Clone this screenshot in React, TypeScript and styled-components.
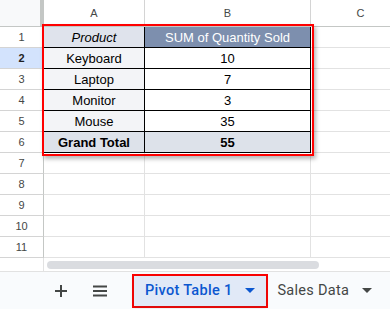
import styled, { createGlobalStyle } from "styled-components";

const GlobalStyle = createGlobalStyle`
    html, body {
        margin: 0;
        padding: 0;
        background: #ffffff;
    }
`;

type CellProps = {
    $bg?: string;
    $color?: string;
    $italic?: boolean;
    $bold?: boolean;
    $pivot?: boolean;
};

const rows: { name: string; qty: string }[] = [
    { name: "Keyboard", qty: "10" },
    { name: "Laptop", qty: "7" },
    { name: "Monitor", qty: "3" },
    { name: "Mouse", qty: "35" },
];

const App = () => {
    const emptyRows = [7, 8, 9, 10, 11];

    return (
        <>
            <GlobalStyle />
            <Sheet>
                <GridArea>
                    <Grid>
                        <Corner />
                        <ColHeader>A</ColHeader>
                        <ColHeader>B</ColHeader>
                        <ColHeader>C</ColHeader>

                        <RowHeader>1</RowHeader>
                        <Cell $pivot $bg="#dfe3ec" $italic>Product</Cell>
                        <Cell $pivot $bg="#7d8fae" $color="#ffffff">SUM of Quantity Sold</Cell>
                        <Cell />

                        {rows.map((r, i) => (
                            <Row key={r.name} selected={i === 0} num={i + 2} name={r.name} qty={r.qty} />
                        ))}

                        <RowHeader>6</RowHeader>
                        <Cell $pivot $bg="#dde2ea" $bold>Grand Total</Cell>
                        <Cell $pivot $bg="#dde2ea" $bold>55</Cell>
                        <Cell />

                        {emptyRows.map((n) => (
                            <EmptyRow key={n} num={n} />
                        ))}
                    </Grid>
                    <Highlight />
                </GridArea>

                <ScrollRow>
                    <ScrollCorner />
                    <ScrollTrack>
                        <ScrollThumb />
                    </ScrollTrack>
                </ScrollRow>

                <TabBar>
                    <IconButton>
                        <svg width="14" height="14" viewBox="0 0 14 14">
                            <path d="M7 1v12M1 7h12" stroke="#444746" strokeWidth="2" />
                        </svg>
                    </IconButton>
                    <IconButton>
                        <svg width="16" height="12" viewBox="0 0 16 12">
                            <path d="M1 1.5h14M1 6h14M1 10.5h14" stroke="#444746" strokeWidth="1.8" />
                        </svg>
                    </IconButton>
                    <ActiveTabFrame>
                        <Tab $active>
                            Pivot Table 1
                            <Caret $color="#0b57d0" />
                        </Tab>
                    </ActiveTabFrame>
                    <Tab>
                        Sales Data
                        <Caret $color="#444746" />
                    </Tab>
                </TabBar>
            </Sheet>
        </>
    );
};

const Row = ({ num, name, qty, selected }: { num: number; name: string; qty: string; selected: boolean }) => (
    <>
        <RowHeader $selected={selected}>{num}</RowHeader>
        <Cell $pivot $bg="#f3f4f7">{name}</Cell>
        <Cell $pivot $bg="#ffffff">{qty}</Cell>
        <Cell />
    </>
);

const EmptyRow = ({ num }: { num: number }) => (
    <>
        <RowHeader>{num}</RowHeader>
        <Cell />
        <Cell />
        <Cell />
    </>
);

export default App;

const Sheet = styled.div`
    width: 390px;
    height: 309px;
    overflow: hidden;
    display: flex;
    flex-direction: column;
    font-family: "Liberation Sans", Arial, sans-serif;
    background: #ffffff;
`;

const GridArea = styled.div`
    position: relative;
    height: 258px;
    flex-shrink: 0;
    overflow: hidden;
`;

const Grid = styled.div`
    display: grid;
    grid-template-columns: 44px 101px 166px 100px;
    grid-template-rows: 27px repeat(11, 21px);
`;

const Corner = styled.div`
    background: #f8f9fa;
    border-right: 4px solid #c4c7c5;
    border-bottom: 1px solid #c4c7c5;
`;

const ColHeader = styled.div`
    display: flex;
    align-items: center;
    justify-content: center;
    background: #ffffff;
    color: #444746;
    font-size: 11px;
    border-right: 1px solid #d4d4d4;
    border-bottom: 1px solid #c4c7c5;
`;

const RowHeader = styled.div<{ $selected?: boolean }>`
    display: flex;
    align-items: center;
    justify-content: center;
    font-size: 11px;
    color: ${({ $selected }) => ($selected ? "#1f1f1f" : "#444746")};
    font-weight: ${({ $selected }) => ($selected ? 700 : 400)};
    background: ${({ $selected }) => ($selected ? "#d3e3fd" : "#ffffff")};
    border-right: 1px solid #c4c7c5;
    border-bottom: 1px solid #d4d4d4;
`;

const Cell = styled.div<CellProps>`
    display: flex;
    align-items: center;
    justify-content: center;
    font-size: 13px;
    white-space: nowrap;
    overflow: hidden;
    color: ${({ $color }) => $color ?? "#000000"};
    background: ${({ $bg }) => $bg ?? "#ffffff"};
    font-style: ${({ $italic }) => ($italic ? "italic" : "normal")};
    font-weight: ${({ $bold }) => ($bold ? 700 : 400)};
    border-right: 1px solid ${({ $pivot }) => ($pivot ? "#000000" : "#e2e2e2")};
    border-bottom: 1px solid ${({ $pivot }) => ($pivot ? "#000000" : "#e2e2e2")};
`;

const Highlight = styled.div`
    position: absolute;
    left: 42px;
    top: 24px;
    width: 268px;
    height: 128px;
    border: 2px solid #ff0000;
    box-shadow: 2px 3px 4px rgba(0, 0, 0, 0.28);
    pointer-events: none;
`;

const ScrollRow = styled.div`
    display: flex;
    box-sizing: border-box;
    height: 14px;
    flex-shrink: 0;
    border-bottom: 1px solid #e2e2e2;
`;

const ScrollCorner = styled.div`
    width: 44px;
    border-right: 1px solid #e2e2e2;
    box-sizing: border-box;
`;

const ScrollTrack = styled.div`
    flex: 1;
    display: flex;
    align-items: center;
    padding-left: 3px;
`;

const ScrollThumb = styled.div`
    width: 272px;
    height: 8px;
    border-radius: 4px;
    background: #dadce0;
`;

const TabBar = styled.div`
    flex: 1;
    display: flex;
    align-items: center;
    background: #f9fbfd;
    padding-left: 48px;
    font-family: Roboto, "Liberation Sans", sans-serif;
`;

const IconButton = styled.div`
    width: 26px;
    height: 26px;
    flex-shrink: 0;
    display: flex;
    align-items: center;
    justify-content: center;
    margin-right: 13px;
`;

const ActiveTabFrame = styled.div`
    flex-shrink: 0;
    border: 2px solid #ff0000;
    margin-left: 6px;
    height: 30px;
    display: flex;
`;

const Tab = styled.div<{ $active?: boolean }>`
    flex-shrink: 0;
    white-space: nowrap;
    display: flex;
    align-items: center;
    gap: 13px;
    font-size: 14.5px;
    letter-spacing: 0.3px;
    font-weight: ${({ $active }) => ($active ? 500 : 400)};
    color: ${({ $active }) => ($active ? "#0b57d0" : "#444746")};
    background: ${({ $active }) => ($active ? "#e1e9f7" : "transparent")};
    box-shadow: ${({ $active }) => ($active ? "0 1px 3px rgba(60, 64, 67, 0.3)" : "none")};
    padding: ${({ $active }) => ($active ? "0 11px 0 11px" : "0 13px 0 9px")};
`;

const Caret = styled.span<{ $color: string }>`
    width: 0;
    height: 0;
    border-left: 5px solid transparent;
    border-right: 5px solid transparent;
    border-top: 5px solid ${({ $color }) => $color};
`;
